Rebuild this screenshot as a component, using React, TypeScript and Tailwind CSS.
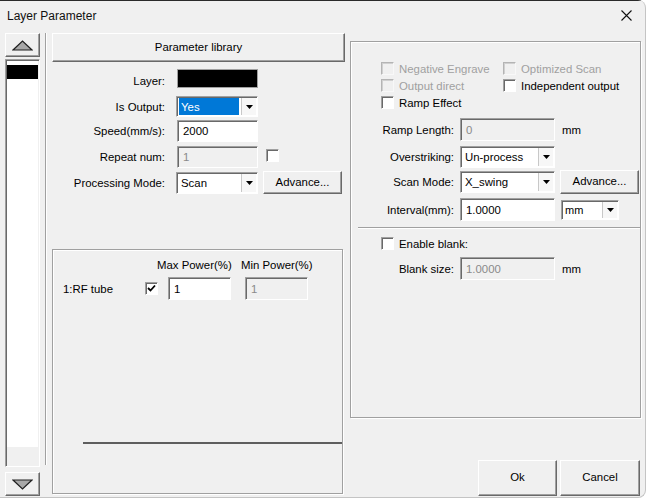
import React from "react";

const raised =
  "bg-[#f0f0f0] border border-t-white border-l-white border-r-[#696969] border-b-[#696969] shadow-[inset_-1px_-1px_#a0a0a0]";
const sunken =
  "border border-t-[#a0a0a0] border-l-[#a0a0a0] border-r-white border-b-white shadow-[inset_1px_1px_#696969]";
const groupBox =
  "border border-[#a0a0a0] shadow-[inset_1px_1px_#ffffff,1px_1px_#ffffff]";

function Arrow() {
  return (
    <svg width="7" height="4" viewBox="0 0 7 4">
      <path d="M0 0H7L3.5 4Z" fill="#000" />
    </svg>
  );
}

function Combo({
  cls,
  text,
  highlight,
  small,
}: {
  cls: string;
  text: string;
  highlight?: boolean;
  small?: boolean;
}) {
  return (
    <div className={`${sunken} bg-white flex items-stretch p-px ${cls}`}>
      <div className="flex-1 flex items-center min-w-0">
        {highlight ? (
          <div className="h-full w-[60px] bg-[#0078d7] text-white flex items-center pl-[2px] pt-[2px] ml-px">
            {text}
          </div>
        ) : (
          <span className={small ? "pl-[2px] pt-[2px] text-[11px]" : "pl-[3px] pt-[2px]"}>{text}</span>
        )}
      </div>
      <div className="w-[15px] bg-[#f7f7f7] border-l border-[#c8c8c8] flex items-center justify-center">
        <Arrow />
      </div>
    </div>
  );
}

function Input({ cls, text, disabled }: { cls: string; text: string; disabled?: boolean }) {
  return (
    <div
      className={`${sunken} ${disabled ? "bg-[#f0f0f0] text-[#8a8a8a]" : "bg-white"} flex items-center pl-[5px] pt-[2px] ${cls}`}
    >
      {text}
    </div>
  );
}

function Check({ disabled, checked }: { disabled?: boolean; checked?: boolean }) {
  return (
    <div
      className={`w-[13px] h-[13px] shrink-0 border ${
        disabled
          ? "border-t-[#b4b4b4] border-l-[#b4b4b4] border-r-[#f8f8f8] border-b-[#f8f8f8] bg-[#f0f0f0] shadow-[inset_1px_1px_#d0d0d0]"
          : "border-t-[#a0a0a0] border-l-[#a0a0a0] border-r-white border-b-white bg-white shadow-[inset_1px_1px_#696969]"
      } flex items-center justify-center`}
    >
      {checked && (
        <svg width="9" height="9" viewBox="0 0 9 9">
          <path d="M1 4 L3.5 6.5 L8 1.5" stroke="#000" strokeWidth="1.8" fill="none" />
        </svg>
      )}
    </div>
  );
}

function Btn({ cls, children }: { cls: string; children: React.ReactNode }) {
  return <div className={`${raised} flex items-center justify-center ${cls}`}>{children}</div>;
}

function Label({ cls, children }: { cls: string; children: React.ReactNode }) {
  return <div className={`text-right pt-[2px] ${cls}`}>{children}</div>;
}

function Tri({ down }: { down?: boolean }) {
  return (
    <svg width="21" height="11" viewBox="0 0 21 11">
      <path
        d={down ? "M1 1 H20 L10.5 10 Z" : "M1 10 H20 L10.5 1 Z"}
        fill="#a8a8a8"
        stroke="#202020"
        strokeWidth="1.2"
        strokeLinejoin="miter"
      />
    </svg>
  );
}

export default function App() {
  return (
    <div className="w-[652px] h-[500px] bg-white font-['Liberation_Sans',Arial,sans-serif] text-[11.4px] text-black leading-none">
      <div className="w-[646px] h-[498px] bg-[#f0f0f0] border-r border-b border-[#c4c4c4] rounded-tr-[8px] rounded-br-[8px] flex flex-col overflow-hidden">
        {/* title bar */}
        <div className="h-[33px] shrink-0 flex items-center justify-between pl-[7px] pr-[13px] border-t border-[#2a2a2a]">
          <span className="text-[12px] -mt-[3px] text-[#111]">Layer Parameter</span>
          <svg width="11" height="11" viewBox="0 0 11 11" className="-mt-[4px]">
            <path d="M0.5 0.5 L10.5 10.5 M10.5 0.5 L0.5 10.5" stroke="#111" strokeWidth="1.1" />
          </svg>
        </div>

        {/* body */}
        <div className="flex flex-1">
          {/* left list column */}
          <div className="ml-[5px] w-[35px] flex flex-col">
            <Btn cls="h-[24px] w-[35px]">
              <Tri />
            </Btn>
            <div className={`${sunken} mt-[2px] h-[408px] flex flex-col p-px`}>
              <div className="bg-white flex-1 flex flex-col">
                <div className="h-[14px] bg-black mt-[4px]" />
              </div>
              <div className="h-[18px] bg-[#f0f0f0]" />
            </div>
            <Btn cls="mt-[5px] h-[24px] w-[35px]">
              <Tri down />
            </Btn>
          </div>

          {/* separator */}
          <div className="ml-[5px] w-[2px] h-[432px] border-l border-[#a0a0a0] border-r border-r-white" />

          {/* middle column */}
          <div className="ml-[5px] w-[291px] flex flex-col">
            <Btn cls="h-[29px] w-[293px]">Parameter library</Btn>

            <div className="flex items-center h-[19px] mt-[7px]">
              <div className="w-[113px] text-right pt-[7px]">Layer:</div>
              <div className="ml-[12px] w-[81px] h-[19px] bg-black border border-[#a0a0a0]" />
            </div>

            <div className="flex items-center h-[21px] mt-[8px]">
              <Label cls="w-[113px]">Is Output:</Label>
              <Combo cls="ml-[11px] w-[82px] h-[21px]" text="Yes" highlight />
            </div>

            <div className="flex items-center h-[22px] mt-[3px]">
              <Label cls="w-[113px]">Speed(mm/s):</Label>
              <Input cls="ml-[12px] w-[81px] h-[22px]" text="2000" />
            </div>

            <div className="flex items-center h-[22px] mt-[4px]">
              <Label cls="w-[113px]">Repeat num:</Label>
              <Input cls="ml-[12px] w-[81px] h-[22px]" text="1" disabled />
              <div className="ml-[8px] -mt-[4px]">
                <Check />
              </div>
            </div>

            <div className="flex items-center h-[23px] mt-[3px]">
              <Label cls="w-[113px]">Processing Mode:</Label>
              <Combo cls="ml-[11px] w-[82px] h-[22px]" text="Scan" />
              <Btn cls="ml-[5px] w-[79px] h-[23px]">Advance...</Btn>
            </div>

            {/* power group */}
            <div className={`${groupBox} mt-[55px] h-[245px] w-[291px] flex flex-col`}>
              <div className="flex mt-[8px] h-[14px] items-center pt-[2px]">
                <span className="ml-[104px] w-[84px]">Max Power(%)</span>
                <span>Min Power(%)</span>
              </div>
              <div className="flex items-center mt-[5px] h-[23px]">
                <span className="ml-[10px] w-[82px] pt-[2px]">1:RF tube</span>
                <Check checked />
                <Input cls="ml-[10px] w-[63px] h-[23px]" text="1" />
                <Input cls="ml-[14px] w-[63px] h-[23px]" text="1" disabled />
              </div>
              <div className="mt-[142px] ml-[30px] h-[2px] bg-[#5e5e5e]" />
            </div>
          </div>

          {/* right column */}
          <div className="ml-[7px] w-[291px] flex flex-col">
            <div className={`${groupBox} mt-[8px] h-[377px] w-[291px] flex flex-col`}>
              <div className="mt-[18px] flex flex-col">
                <div className="flex items-center h-[17px] ml-[30px]">
                  <div className="w-[122px] flex items-center gap-[5px] text-[#a0a0a0]">
                    <Check disabled />
                    <span className="pt-[2px]">Negative Engrave</span>
                  </div>
                  <div className="flex items-center gap-[5px] text-[#a0a0a0]">
                    <Check disabled />
                    <span className="pt-[2px]">Optimized Scan</span>
                  </div>
                </div>
                <div className="flex items-center h-[17px] ml-[30px]">
                  <div className="w-[122px] flex items-center gap-[5px] text-[#a0a0a0]">
                    <Check disabled />
                    <span className="pt-[2px]">Output direct</span>
                  </div>
                  <div className="flex items-center gap-[5px]">
                    <Check />
                    <span className="pt-[2px]">Independent output</span>
                  </div>
                </div>
                <div className="flex items-center h-[17px] ml-[30px]">
                  <div className="flex items-center gap-[5px]">
                    <Check />
                    <span className="pt-[2px]">Ramp Effect</span>
                  </div>
                </div>
              </div>

              <div className="flex items-center h-[23px] mt-[7px]">
                <Label cls="w-[103px]">Ramp Length:</Label>
                <Input cls="ml-[6px] w-[95px] h-[23px]" text="0" disabled />
                <span className="ml-[7px] pt-[2px]">mm</span>
              </div>

              <div className="flex items-center h-[22px] mt-[5px]">
                <Label cls="w-[103px]">Overstriking:</Label>
                <Combo cls="ml-[6px] w-[95px] h-[22px]" text="Un-process" />
              </div>

              <div className="flex items-center h-[24px] mt-[2px]">
                <Label cls="w-[103px]">Scan Mode:</Label>
                <Combo cls="ml-[6px] w-[95px] h-[22px]" text="X_swing" />
                <Btn cls="ml-[5px] w-[79px] h-[24px]">Advance...</Btn>
              </div>

              <div className="flex items-center h-[23px] mt-[4px]">
                <Label cls="w-[103px]">Interval(mm):</Label>
                <Input cls="ml-[6px] w-[95px] h-[23px]" text="1.0000" />
                <Combo cls="ml-[6px] w-[58px] h-[20px]" text="mm" small />
              </div>

              <div className="mt-[6px] ml-[7px] h-[2px] border-t border-[#a0a0a0] border-b border-b-white" />

              <div className="flex items-center h-[17px] mt-[6px] ml-[30px] gap-[5px]">
                <Check />
                <span className="pt-[2px]">Enable blank:</span>
              </div>

              <div className="flex items-center h-[23px] mt-[5px]">
                <Label cls="w-[103px]">Blank size:</Label>
                <Input cls="ml-[6px] w-[95px] h-[23px]" text="1.0000" disabled />
                <span className="ml-[7px] pt-[2px]">mm</span>
              </div>
            </div>

            <div className="flex mt-[42px] ml-[128px] gap-[3px]">
              <Btn cls="w-[79px] h-[36px]">Ok</Btn>
              <Btn cls="w-[80px] h-[36px]">Cancel</Btn>
            </div>
          </div>
        </div>
      </div>
    </div>
  );
}
